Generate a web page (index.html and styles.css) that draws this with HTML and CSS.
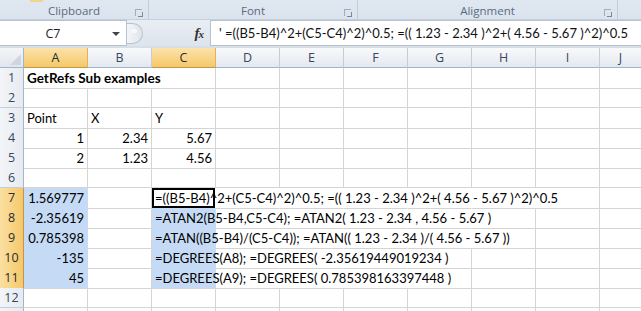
FILE: index.html
```html
<!DOCTYPE html>
<html>
<head>
<meta charset="utf-8">
<link rel="stylesheet" href="styles.css">
</head>
<body>
<div class="app">
  <div class="ribbon">
    <div class="group g-clip"><span class="paste-tip"></span><span class="glabel">Clipboard</span><span class="launch"></span></div>
    <div class="group g-font"><span class="glabel">Font</span><span class="launch"></span></div>
    <div class="group g-align"><span class="glabel">Alignment</span><span class="launch"></span></div>
    <div class="group g-rest"></div>
  </div>
  <div class="fbar">
    <div class="namebox"><span class="nb-text">C7</span><span class="nb-arrow"></span></div>
    <div class="fmid">
      <span class="splitter"></span>
      <span class="fx"><i>f</i><i class="x">x</i></span>
    </div>
    <div class="finput">' =((B5-B4)^2+(C5-C4)^2)^0.5; =(( 1.23 - 2.34 )^2+( 4.56 - 5.67 )^2)^0.5</div>
  </div>
  <div class="gap"></div>
  <div class="sheet">
    <div class="row hdr">
      <div class="corner"><span class="tri"></span></div>
      <div class="ch sel">A</div><div class="ch">B</div><div class="ch sel">C</div><div class="ch">D</div><div class="ch">E</div><div class="ch">F</div><div class="ch">G</div><div class="ch">H</div><div class="ch">I</div><div class="ch last">J</div>
    </div>
    <div class="row">
      <div class="rh">1</div>
      <div class="c bold nb">GetRefs Sub examples</div><div class="c nb"></div><div class="c"></div><div class="c"></div><div class="c"></div><div class="c"></div><div class="c"></div><div class="c"></div><div class="c"></div><div class="c last"></div>
    </div>
    <div class="row">
      <div class="rh">2</div>
      <div class="c"></div><div class="c"></div><div class="c"></div><div class="c"></div><div class="c"></div><div class="c"></div><div class="c"></div><div class="c"></div><div class="c"></div><div class="c last"></div>
    </div>
    <div class="row">
      <div class="rh">3</div>
      <div class="c">Point</div><div class="c">X</div><div class="c">Y</div><div class="c"></div><div class="c"></div><div class="c"></div><div class="c"></div><div class="c"></div><div class="c"></div><div class="c last"></div>
    </div>
    <div class="row">
      <div class="rh">4</div>
      <div class="c num">1</div><div class="c num">2.34</div><div class="c num">5.67</div><div class="c"></div><div class="c"></div><div class="c"></div><div class="c"></div><div class="c"></div><div class="c"></div><div class="c last"></div>
    </div>
    <div class="row">
      <div class="rh">5</div>
      <div class="c num">2</div><div class="c num">1.23</div><div class="c num">4.56</div><div class="c"></div><div class="c"></div><div class="c"></div><div class="c"></div><div class="c"></div><div class="c"></div><div class="c last"></div>
    </div>
    <div class="row">
      <div class="rh">6</div>
      <div class="c"></div><div class="c"></div><div class="c"></div><div class="c"></div><div class="c"></div><div class="c"></div><div class="c"></div><div class="c"></div><div class="c"></div><div class="c last"></div>
    </div>
    <div class="row">
      <div class="rh sel">7</div>
      <div class="c num s">1.569777</div><div class="c"></div><div class="c active nb">=((B5-B4)^2+(C5-C4)^2)^0.5; =(( 1.23 - 2.34 )^2+( 4.56 - 5.67 )^2)^0.5</div><div class="c nb"></div><div class="c nb"></div><div class="c nb"></div><div class="c nb"></div><div class="c nb"></div><div class="c"></div><div class="c last"></div>
    </div>
    <div class="row">
      <div class="rh sel">8</div>
      <div class="c num s">-2.35619</div><div class="c"></div><div class="c s nb">=ATAN2(B5-B4,C5-C4); =ATAN2( 1.23 - 2.34 , 4.56 - 5.67 )</div><div class="c nb"></div><div class="c nb"></div><div class="c nb"></div><div class="c nb"></div><div class="c"></div><div class="c"></div><div class="c last"></div>
    </div>
    <div class="row">
      <div class="rh sel">9</div>
      <div class="c num s">0.785398</div><div class="c"></div><div class="c s nb">=ATAN((B5-B4)/(C5-C4)); =ATAN(( 1.23 - 2.34 )/( 4.56 - 5.67 ))</div><div class="c nb"></div><div class="c nb"></div><div class="c nb"></div><div class="c nb"></div><div class="c"></div><div class="c"></div><div class="c last"></div>
    </div>
    <div class="row">
      <div class="rh sel">10</div>
      <div class="c num s">-135</div><div class="c"></div><div class="c s nb">=DEGREES(A8); =DEGREES( -2.35619449019234 )</div><div class="c nb"></div><div class="c nb"></div><div class="c nb"></div><div class="c"></div><div class="c"></div><div class="c"></div><div class="c last"></div>
    </div>
    <div class="row">
      <div class="rh sel">11</div>
      <div class="c num s s-bot">45</div><div class="c"></div><div class="c s s-bot nb">=DEGREES(A9); =DEGREES( 0.785398163397448 )</div><div class="c nb"></div><div class="c nb"></div><div class="c nb"></div><div class="c"></div><div class="c"></div><div class="c"></div><div class="c last"></div>
    </div>
    <div class="row">
      <div class="rh">12</div>
      <div class="c"></div><div class="c"></div><div class="c"></div><div class="c"></div><div class="c"></div><div class="c"></div><div class="c"></div><div class="c"></div><div class="c"></div><div class="c last"></div>
    </div>
    <div class="row">
      <div class="rh"></div>
      <div class="c"></div><div class="c"></div><div class="c"></div><div class="c"></div><div class="c"></div><div class="c"></div><div class="c"></div><div class="c"></div><div class="c"></div><div class="c last"></div>
    </div>
  </div>
</div>
</body>
</html>
```

FILE: styles.css
```css
* { box-sizing: border-box; }
html, body { margin: 0; padding: 0; }
body { width: 641px; height: 311px; overflow: hidden; background: #fff; font-family: "Lato", "Liberation Sans", sans-serif; }
.app { display: flex; flex-direction: column; width: 641px; height: 311px; overflow: hidden; }
.app > * { flex: none; }

.ribbon { display: flex; height: 20px; background: linear-gradient(#dfe7f1, #dbe4ee); border-bottom: 1px solid #c5cfdb; }
.group { position: relative; display: flex; align-items: flex-end; justify-content: center; border-right: 1px solid #c2cbd6; height: 100%; }
.g-clip { width: 149px; }
.g-font { width: 209px; }
.g-align { width: 260px; }
.g-rest { flex: 1; border-right: none; }
.glabel { font-family: "Open Sans", "Noto Sans", sans-serif; font-size: 11.5px; line-height: 16px; color: #5b6b80; }
.launch { position: absolute; right: 6px; top: 9px; width: 7px; height: 7px; border: 1px solid #a2adbb; border-width: 1px 0 0 1px; }
.launch::after { content: ""; position: absolute; right: -1px; bottom: -1px; width: 4px; height: 4px; border-right: 1px solid #7a8797; border-bottom: 1px solid #7a8797; }
.paste-tip { position: absolute; left: 30px; top: 0; width: 13px; height: 2px; background: #f3d48c; }

.fbar { display: flex; height: 26px; background: linear-gradient(#e9eef4, #dde4ec); }
.namebox { width: 127px; background: #fff; border: 1px solid #b7c2cf; border-left: none; display: flex; align-items: center; position: relative; }
.nb-text { width: 100%; text-align: center; font-family: "Open Sans", "Noto Sans", sans-serif; font-size: 12.5px; color: #222; padding-right: 20px; }
.nb-arrow { position: absolute; right: 6px; top: 11px; width: 0; height: 0; border-left: 4px solid transparent; border-right: 4px solid transparent; border-top: 4px solid #444; }
.fmid { width: 84px; display: flex; align-items: center; position: relative; border-right: 1px solid #b7c2cf; }
.splitter { width: 16px; height: 21px; border-radius: 0 11px 11px 0; border: 1px solid #b9c3cf; border-left: none; background: linear-gradient(90deg, #f3f5f8, #dfe5ec); position: relative; }
.splitter::after { content: ""; position: absolute; left: 4px; top: 5px; width: 6px; height: 4px; border-radius: 3px; background: #f7f9fb; }
.fx { margin-left: auto; margin-right: 7px; font-family: "Liberation Serif", serif; font-size: 15px; font-weight: bold; color: #333; letter-spacing: -1px; }
.fx .x { font-size: 11px; }
.finput { flex: 1; background: #fff; border-top: 1px solid #b7c2cf; border-bottom: 1px solid #b7c2cf; font-size: 13px; color: #111; padding-left: 8px; display: flex; align-items: center; white-space: nowrap; overflow: hidden; }

.gap { height: 2px; background: #d7dee6; }

.sheet { display: flex; flex-direction: column; background: #fff; }
.row { display: grid; grid-template-columns: 24px repeat(9, 64px) 41px; height: 20px; flex: none; }
.corner { background: linear-gradient(#f3f5f8, #e2e6ec); border-right: 1px solid #9eb6ce; border-bottom: 1px solid #9eb6ce; position: relative; }
.tri { position: absolute; right: 2px; bottom: 2px; width: 0; height: 0; border-left: 11px solid transparent; border-bottom: 11px solid #d0d6de; }
.ch { background: linear-gradient(#f8f9fb, #e4e8ee); border-right: 1px solid #c5cdd7; border-bottom: 1px solid #9eb6ce; text-align: center; line-height: 19px; color: #36475e; font-family: "Open Sans", "Noto Sans", sans-serif; font-size: 12.5px; }
.ch.last { border-right: none; }
.ch.sel { background: linear-gradient(#fbe3ab, #f5c869); border-right-color: #e1b25a; border-bottom-color: #c2954a; color: #2b2b2b; }
.rh { background: linear-gradient(90deg, #f3f5f8, #e7ebf0); border-right: 1px solid #9eb6ce; border-bottom: 1px solid #c5cdd7; text-align: center; font-family: "Open Sans", "Noto Sans", sans-serif; font-size: 12.5px; line-height: 19px; color: #36475e; }
.rh.sel { background: linear-gradient(90deg, #fbe0a2, #f5c86a); border-right-color: #c2954a; border-bottom-color: #e1b25a; color: #2b2b2b; }
.c { border-right: 1px solid #d4d4d4; border-bottom: 1px solid #d4d4d4; font-size: 13px; line-height: 20px; color: #000; padding: 0 3px; white-space: nowrap; overflow: visible; min-width: 0; }
.c.last { border-right: none; }
.c.nb { border-right-color: transparent; }
.c.bold { font-weight: bold; font-size: 13.5px; }
.c.num { text-align: right; }
.c.s { background: #c5dbf5; border-bottom-color: #c5dbf5; border-right-color: #c5dbf5; }
.c.s-bot { border-bottom-color: #d4d4d4; }
.c.active { box-shadow: inset 0 0 0 2px #000; background: transparent; }
```
